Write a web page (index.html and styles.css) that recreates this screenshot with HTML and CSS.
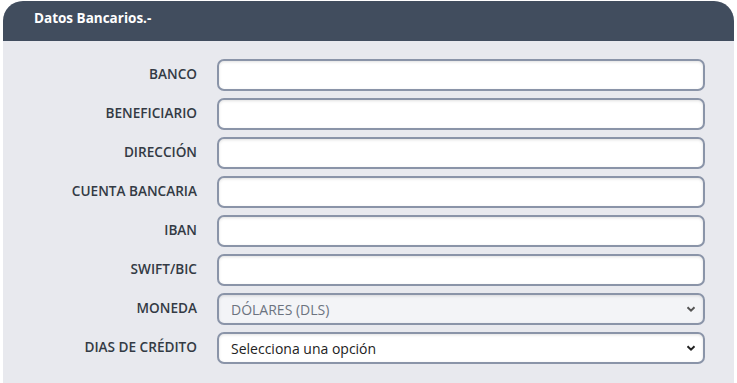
FILE: index.html
```html
<!DOCTYPE html>
<html lang="es">
<head>
    <meta charset="UTF-8">
    <meta name="viewport" content="width=device-width, initial-scale=1.0">
    <title>Datos Bancarios</title>
    <link rel="stylesheet" href="styles.css">
</head>
<body>
    <div class="panel">
        <div class="panel-header">Datos Bancarios.-</div>
        <div class="panel-body">
            <label for="banco">BANCO</label>
            <input type="text" id="banco">
            <label for="beneficiario">BENEFICIARIO</label>
            <input type="text" id="beneficiario">
            <label for="direccion">DIRECCIÓN</label>
            <input type="text" id="direccion">
            <label for="cuenta">CUENTA BANCARIA</label>
            <input type="text" id="cuenta">
            <label for="iban">IBAN</label>
            <input type="text" id="iban">
            <label for="swift">SWIFT/BIC</label>
            <input type="text" id="swift">
            <label for="moneda">MONEDA</label>
            <select id="moneda" disabled>
                <option>DÓLARES (DLS)</option>
            </select>
            <label for="dias">DIAS DE CRÉDITO</label>
            <select id="dias">
                <option>Selecciona una opción</option>
            </select>
        </div>
    </div>
</body>
</html>
```

FILE: styles.css
```css
:root {
    --header-color: #414d5e;
    --body-color: #e8e9ee;
    --field-border: #8a94a8;
    --label-color: #333a44;
}

body {
    margin: 0;
    padding: 1px 3px 0 3px;
    background: #ffffff;
    font-family: 'Open Sans', 'Noto Sans', sans-serif;
}

.panel {
    width: 731px;
    background: var(--body-color);
    border-radius: 20px 20px 0 0;
    overflow: hidden;
}

.panel-header {
    background: var(--header-color);
    color: #ffffff;
    font-weight: 700;
    font-size: 13.5px;
    height: 40px;
    line-height: 34px;
    padding-left: 31px;
}

.panel-body {
    display: grid;
    grid-template-columns: 194px 488px;
    column-gap: 20px;
    row-gap: 7px;
    align-items: center;
    padding: 18px 0 20px 0;
}

label {
    text-align: right;
    font-weight: 600;
    font-size: 13.6px;
    line-height: 18px;
    margin-top: -2px;
    color: var(--label-color);
}

input[type="text"],
select {
    box-sizing: border-box;
    height: 32px;
    width: 488px;
    border: 2px solid var(--field-border);
    border-radius: 7px;
    background: #ffffff;
    box-shadow: inset 0 1px 3px rgba(0, 0, 0, 0.12);
    font-family: 'Open Sans', 'Noto Sans', sans-serif;
    font-size: 14px;
    color: #222222;
    padding: 0 12px;
    margin: 0;
    outline: none;
}

select {
    appearance: none;
    -webkit-appearance: none;
    background-image: url("data:image/svg+xml,%3Csvg xmlns='http://www.w3.org/2000/svg' width='10' height='8' viewBox='0 0 10 8'%3E%3Cpath d='M1.5 2.2 L5 5.7 L8.5 2.2' fill='none' stroke='%23222' stroke-width='2'/%3E%3C/svg%3E");
    background-repeat: no-repeat;
    background-position: right 7px center;
}

select:disabled {
    background-color: #f3f4f7;
    color: #6c737f;
    opacity: 1;
    background-image: url("data:image/svg+xml,%3Csvg xmlns='http://www.w3.org/2000/svg' width='10' height='8' viewBox='0 0 10 8'%3E%3Cpath d='M1.5 2.2 L5 5.7 L8.5 2.2' fill='none' stroke='%23555' stroke-width='2'/%3E%3C/svg%3E");
}
```
